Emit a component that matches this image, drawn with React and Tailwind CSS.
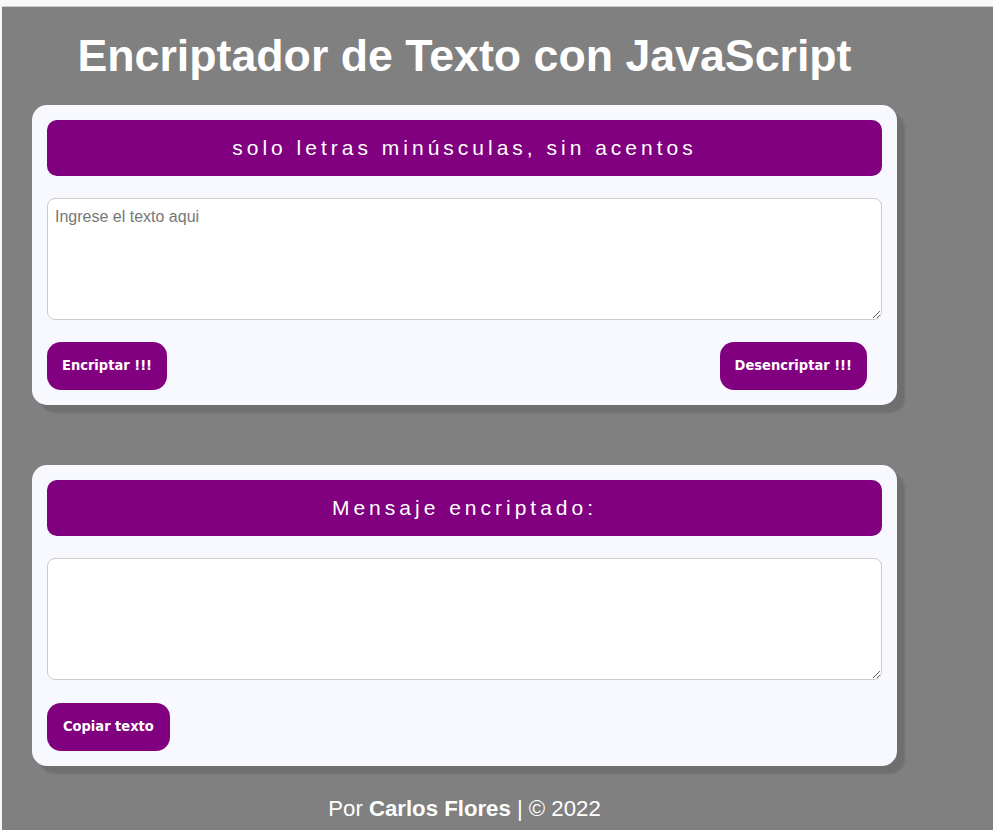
export default function App() {
  const card = "w-[865px] rounded-[15px] bg-[#f8f8ff] p-[15px] shadow-[8px_8px_2px_rgba(0,0,0,0.13)]";
  const header = "h-[56px] rounded-[10px] bg-[#800080] flex items-center justify-center text-white text-[21px] tracking-[4px]";
  const ta = "block w-full h-[122px] rounded-[8px] border border-[#ccc] bg-white px-[7px] py-[6px] text-[16px] text-[#333] placeholder:text-[#777] mt-[22px]";
  const btn = "h-[48px] rounded-[14px] bg-[#800080] text-white font-bold text-[14.5px] px-[15px]";
  const sans = { fontFamily: '"Liberation Sans", Arial, sans-serif' };
  const btnFont = { fontFamily: '"DejaVu Sans Condensed", "DejaVu Sans", Tahoma, sans-serif' };
  return (
    <div className="w-[993px] h-[830px] bg-[#f8f8fb] pt-[6px] pl-[2px] overflow-hidden" style={sans}>
      <div className="h-[824px] bg-[#808080] border-t border-[#c8c8c8]">
        <div className="w-[865px] ml-[30px]">
          <h1 className="text-white font-bold text-[44.7px] text-center leading-none pt-[27px] pb-[26px]">
            Encriptador de Texto con JavaScript
          </h1>
          <div className={card}>
            <div className={header}>solo letras minúsculas, sin acentos</div>
            <textarea className={ta} placeholder="Ingrese el texto aqui" style={sans}></textarea>
            <div className="flex justify-between mt-[22px] pr-[15px]">
              <button className={btn} style={btnFont}>Encriptar !!!</button>
              <button className={btn} style={btnFont}>Desencriptar !!!</button>
            </div>
          </div>
          <div className={card + " mt-[60px]"}>
            <div className={header}>Mensaje encriptado:</div>
            <textarea className={ta} style={sans}></textarea>
            <div className="flex mt-[23px]">
              <button className={btn + " px-[16px]"} style={btnFont}>Copiar texto</button>
            </div>
          </div>
          <p className="text-white text-[22.2px] text-center mt-[26px]">
            Por <b>Carlos Flores</b> | © 2022
          </p>
        </div>
      </div>
    </div>
  );
}
